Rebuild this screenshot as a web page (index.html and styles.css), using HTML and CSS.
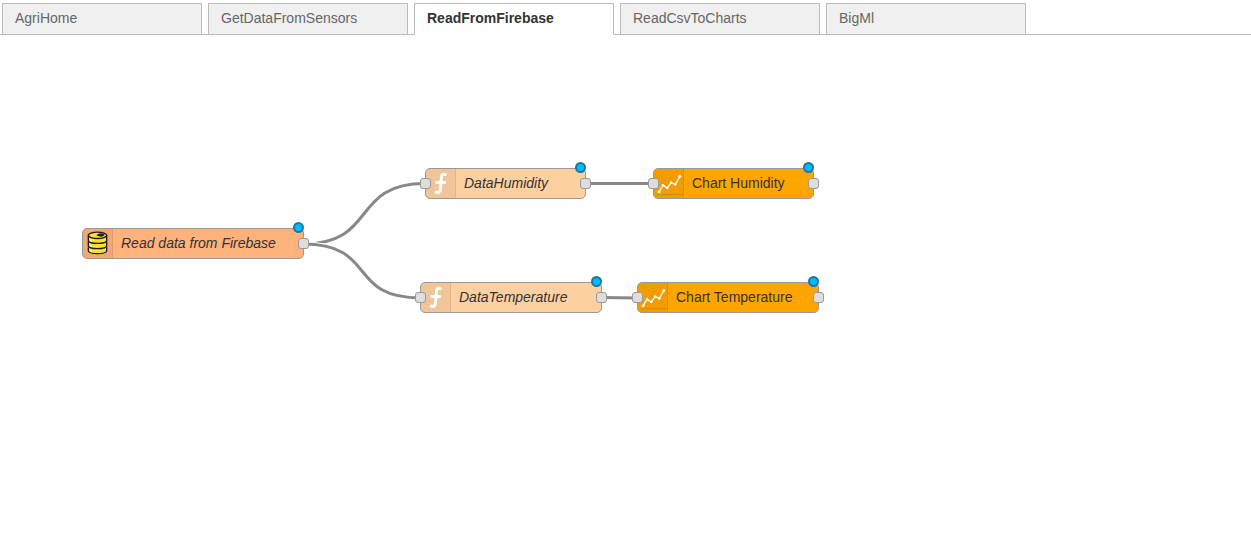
FILE: index.html
```html
<!DOCTYPE html>
<html lang="en">
<head>
<meta charset="utf-8">
<title>ReadFromFirebase</title>
<link rel="stylesheet" href="styles.css">
</head>
<body>
<svg class="defs" aria-hidden="true">
  <symbol id="icon-function" viewBox="0 0 30 30">
    <path d="M20 6C17.500 4.500 16 6 15.900 9L15.100 20C14.800 23.500 13.500 25 10.500 24M11 14H19.500" fill="none" stroke="#fff" stroke-width="3" stroke-linecap="round"/>
  </symbol>
  <symbol id="icon-chart" viewBox="0 0 30 30">
    <path d="M3 26.500H30" stroke="#d68a00" fill="none"/>
    <path d="M5.300 23.700L9.300 16.700L13.700 19.700L17.700 14L22 16L26.700 7.700" fill="none" stroke="#fff" stroke-width="1.300"/>
    <g fill="#fff"><circle cx="5.300" cy="23.700" r="1.500"/><circle cx="9.300" cy="16.700" r="1.300"/><circle cx="13.700" cy="19.700" r="1.300"/><circle cx="17.700" cy="14" r="1.300"/><circle cx="22" cy="16" r="1.300"/><circle cx="26.700" cy="7.700" r="1.500"/></g>
  </symbol>
  <symbol id="icon-database" viewBox="0 0 30 30">
    <g fill="#fbe030" stroke="#1c1c26" stroke-width="1.400">
      <path d="M5.500 19V22.500C6 26.500 24 26.500 24.500 22.500V19"/>
      <path d="M5.500 13V17.500C6 21.300 24 21.300 24.500 17.500V13"/>
      <path d="M5.500 6.500V12C6 15.800 24 15.800 24.500 12V6.500"/>
      <ellipse cx="15" cy="6.500" rx="9.500" ry="3.300"/>
    </g>
    <path d="M14 6.500C15 4 21 4 22.500 6C21 8.500 17 8.500 14 6.500Z" fill="#1c1c26"/>
    <path d="M8.500 10.500V13M8.500 16.500V18.500M8.500 21.500V24" stroke="#fff7a0" stroke-width="2"/>
  </symbol>
</svg>

<nav class="tabs">
  <button class="tab" type="button">AgriHome</button>
  <button class="tab" type="button">GetDataFromSensors</button>
  <button class="tab tab-active" type="button">ReadFromFirebase</button>
  <button class="tab" type="button">ReadCsvToCharts</button>
  <button class="tab" type="button">BigMl</button>
</nav>

<main class="canvas">
  <svg class="wires" aria-hidden="true">
    <path d="M303 209C378 209 350 148.500 425 148.500"/>
    <path class="wire-outline" d="M303 209C378 209 346 263 421 263"/>
    <path d="M303 209C378 209 346 263 421 263"/>
    <path d="M585 148.500H653"/>
    <path d="M601 262.500L638 263"/>
  </svg>
  <div class="node firebase">
    <svg class="icon"><use href="#icon-database"/></svg>
    <span class="label">Read data from Firebase</span>
    <i class="port port-out"></i><i class="changed"></i>
  </div>
  <div class="node function humidity">
    <svg class="icon"><use href="#icon-function"/></svg>
    <span class="label">DataHumidity</span>
    <i class="port port-in"></i><i class="port port-out"></i><i class="changed"></i>
  </div>
  <div class="node function temperature">
    <svg class="icon"><use href="#icon-function"/></svg>
    <span class="label">DataTemperature</span>
    <i class="port port-in"></i><i class="port port-out"></i><i class="changed"></i>
  </div>
  <div class="node chart chart-humidity">
    <svg class="icon"><use href="#icon-chart"/></svg>
    <span class="label">Chart Humidity</span>
    <i class="port port-in"></i><i class="port port-out"></i><i class="changed"></i>
  </div>
  <div class="node chart chart-temperature">
    <svg class="icon"><use href="#icon-chart"/></svg>
    <span class="label">Chart Temperature</span>
    <i class="port port-in"></i><i class="port port-out"></i><i class="changed"></i>
  </div>
</main>
</body>
</html>
```

FILE: styles.css
```css
* { box-sizing: border-box; }
body {
  margin: 0;
  min-height: 100vh;
  display: flex;
  flex-direction: column;
  background: #fff;
  color: #333;
  font: 14px/20px "Liberation Sans", Arial, sans-serif;
}
.defs { position: absolute; width: 0; height: 0; }
.tabs {
  display: flex;
  gap: 6px;
  padding: 3px 2px 0;
  box-shadow: inset 0 -1px #bbb;
}
.tab {
  flex: 0 1 200px;
  min-width: 0;
  height: 32px;
  padding: 0 12px 2px;
  border: 1px solid #bbb;
  background: #f0f0f0;
  color: #666;
  font: inherit;
  text-align: left;
}
.tab-active {
  border-bottom-color: #fff;
  background: #fff;
  color: #333;
  font-weight: bold;
}
.canvas { position: relative; flex: 1; overflow: hidden; }
.wires { position: absolute; inset: 0; width: 100%; height: 100%; }
.wires path { fill: none; stroke: #888; stroke-width: 3; }
.wires .wire-outline { stroke: #fff; stroke-width: 5; }
.node {
  position: absolute;
  display: flex;
  height: 31px;
  border: 1px solid #999;
  border-radius: 5px;
}
.icon {
  flex: none;
  width: 30px;
  height: 100%;
  border-right: 1px solid rgba(0, 0, 0, 0.08);
  border-radius: 4px 0 0 4px;
  background: rgba(0, 0, 0, 0.05);
}
.label { padding: 4px 0 0 8px; white-space: nowrap; }
.firebase { left: 82px; top: 193px; width: 222px; background: #ffb27c; }
.function { background: #fdd0a2; }
.chart { background: #ffa500; }
.firebase .label, .function .label { font-style: italic; }
.humidity { left: 425px; top: 133px; width: 161px; }
.temperature { left: 420px; top: 247px; width: 182px; }
.chart-humidity { left: 653px; top: 133px; width: 161px; }
.chart-temperature { left: 637px; top: 247px; width: 182px; }
.port {
  position: absolute;
  top: 9px;
  width: 11px;
  height: 11px;
  border: 1px solid #999;
  border-radius: 3px;
  background: #ddd;
}
.port-in { left: -6px; }
.port-out { right: -6px; }
.changed {
  position: absolute;
  top: -7px;
  right: -1px;
  width: 11px;
  height: 11px;
  border: 2px solid #147aa5;
  border-radius: 50%;
  background: #00bcff;
}
```
